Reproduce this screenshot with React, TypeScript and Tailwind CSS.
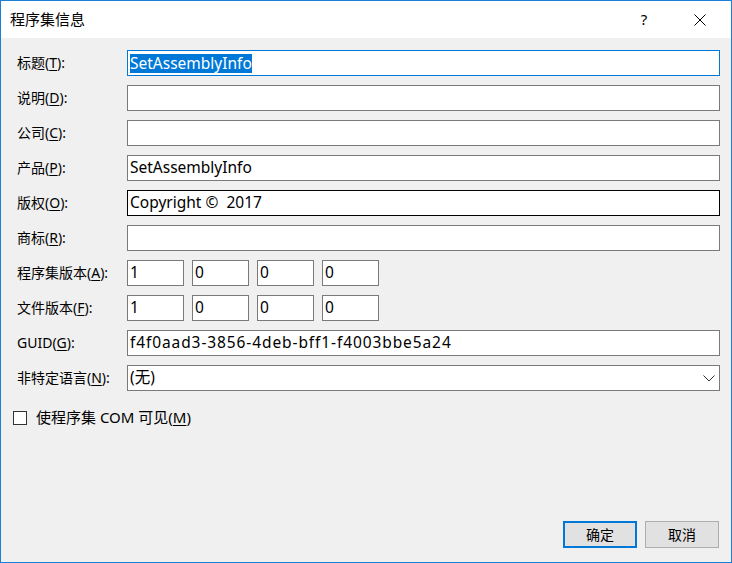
import React from "react";

const font = { fontFamily: '"Noto Sans", "Noto Sans CJK SC", sans-serif' };

function Label({ text, hot, tail = "):" }: { text: string; hot: string; tail?: string }) {
  return (
    <div className="w-[110px] shrink-0 text-[14px] leading-none text-black whitespace-nowrap">
      {text}(<u className="underline-offset-2">{hot}</u>{tail}
    </div>
  );
}

function TextBox({
  value = "",
  variant = "normal",
  extra = "",
}: {
  value?: string;
  variant?: "normal" | "focus" | "hover";
  extra?: string;
}) {
  const border =
    variant === "focus" ? "border-[#0078d7]" : variant === "hover" ? "border-[#000000]" : "border-[#7a7a7a]";
  return (
    <div
      className={`flex-1 h-[26px] bg-white border ${border} flex items-center px-[2px] text-[15.5px] text-black whitespace-pre overflow-hidden ${extra}`}
    >
      {variant === "focus" ? (
        <span className="bg-[#0078d7] text-white leading-[19px]">{value}</span>
      ) : (
        <span>{value}</span>
      )}
    </div>
  );
}

function VersionBoxes({ values }: { values: string[] }) {
  return (
    <div className="flex gap-[8px]">
      {values.map((v, i) => (
        <div
          key={i}
          className="w-[57px] h-[26px] bg-white border border-[#7a7a7a] flex items-center px-[2px] text-[15.5px] text-black"
        >
          {v}
        </div>
      ))}
    </div>
  );
}

export default function App() {
  return (
    <div
      className="w-[732px] h-[563px] border border-[#1a7fd6] flex flex-col bg-[#f0f0f0] overflow-hidden"
      style={font}
    >
      {/* title bar */}
      <div className="h-[37px] bg-white flex items-center shrink-0">
        <div className="pl-[9px] text-[15px] text-black flex-1">程序集信息</div>
        <div className="w-[46px] text-center text-[15px] text-black mr-[10px]">?</div>
        <div className="w-[46px] h-full flex items-center justify-center mr-[8px]">
          <svg width="12" height="12" viewBox="0 0 12 12">
            <path d="M0.5 0.5 L11.5 11.5 M11.5 0.5 L0.5 11.5" stroke="#000" strokeWidth="1" fill="none" />
          </svg>
        </div>
      </div>

      {/* body */}
      <div className="flex-1 flex flex-col pt-[12px] pl-[16px] pr-[11px]">
        <div className="flex flex-col gap-[9px]">
          <div className="flex items-center h-[26px]">
            <Label text="标题" hot="T" />
            <TextBox value="SetAssemblyInfo" variant="focus" />
          </div>
          <div className="flex items-center h-[26px]">
            <Label text="说明" hot="D" />
            <TextBox />
          </div>
          <div className="flex items-center h-[26px]">
            <Label text="公司" hot="C" />
            <TextBox />
          </div>
          <div className="flex items-center h-[26px]">
            <Label text="产品" hot="P" />
            <TextBox value="SetAssemblyInfo" />
          </div>
          <div className="flex items-center h-[26px]">
            <Label text="版权" hot="O" />
            <TextBox value="Copyright ©  2017" variant="hover" />
          </div>
          <div className="flex items-center h-[26px]">
            <Label text="商标" hot="R" />
            <TextBox />
          </div>
          <div className="flex items-center h-[26px]">
            <Label text="程序集版本" hot="A" />
            <VersionBoxes values={["1", "0", "0", "0"]} />
          </div>
          <div className="flex items-center h-[26px]">
            <Label text="文件版本" hot="F" />
            <VersionBoxes values={["1", "0", "0", "0"]} />
          </div>
          <div className="flex items-center h-[26px]">
            <Label text="GUID" hot="G" />
            <TextBox value="f4f0aad3-3856-4deb-bff1-f4003bbe5a24" extra="tracking-[0.9px]" />
          </div>
          <div className="flex items-center h-[26px]">
            <Label text="非特定语言" hot="N" />
            <div className="flex-1 h-[26px] bg-white border border-[#7a7a7a] flex items-center pl-[2px] pr-[4px] text-[15.5px] text-black">
              <span className="flex-1">(无)</span>
              <svg width="12" height="7" viewBox="0 0 12 7">
                <path d="M0.5 0.5 L6 6 L11.5 0.5" stroke="#333" strokeWidth="1" fill="none" />
              </svg>
            </div>
          </div>
        </div>

        <div className="flex items-center mt-[20px] -ml-[4px] h-[13px]">
          <div className="w-[14px] h-[14px] border border-[#333] bg-white" />
          <div className="ml-[9px] text-[15px] leading-none text-black">
            使程序集 COM 可见(<u className="underline-offset-2">M</u>)
          </div>
        </div>

        <div className="mt-auto flex justify-end gap-[8px] pb-[14px] pr-[1px]">
          <div className="w-[74px] h-[27px] bg-[#e1e1e1] border-2 border-[#0078d7] flex items-center justify-center text-[14px] text-black">
            确定
          </div>
          <div className="w-[74px] h-[27px] bg-[#e1e1e1] border border-[#adadad] flex items-center justify-center text-[14px] text-black">
            取消
          </div>
        </div>
      </div>
    </div>
  );
}
